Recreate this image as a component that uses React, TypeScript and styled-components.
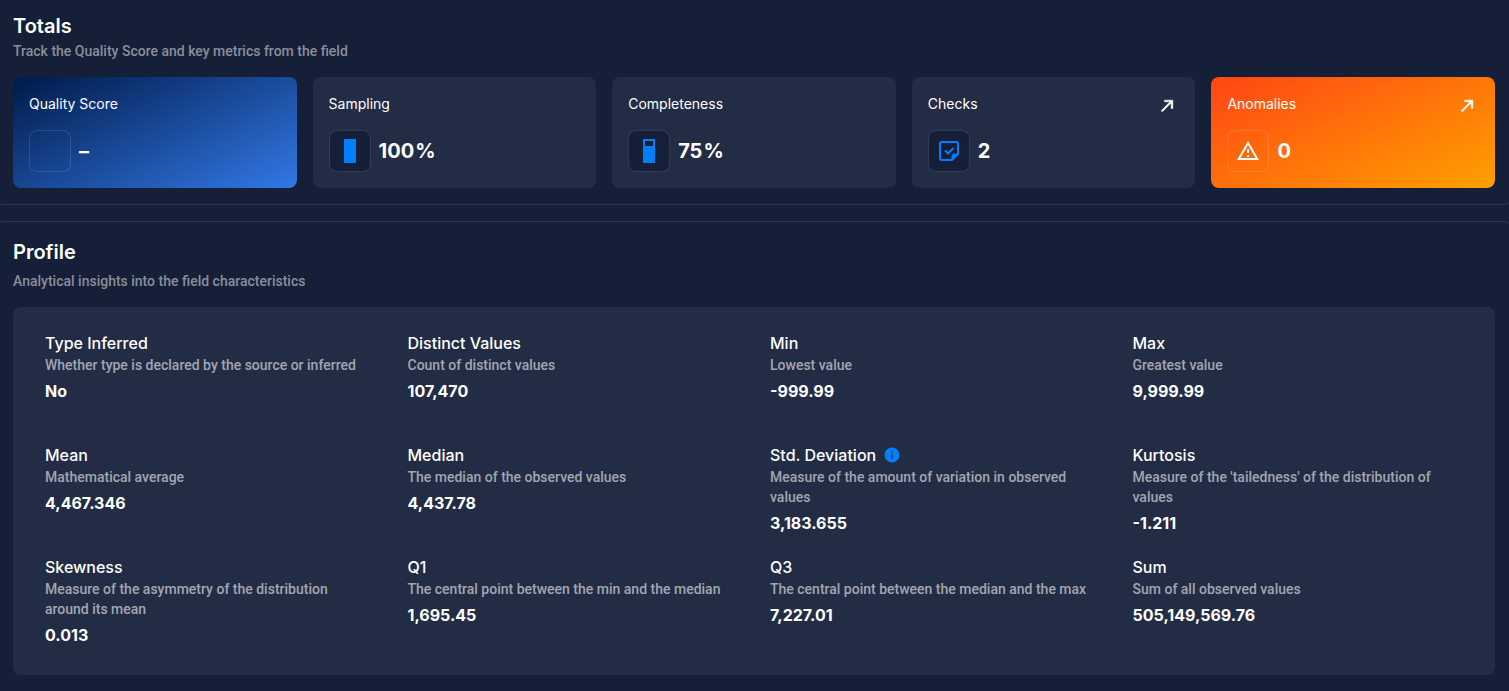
import React from "react";
import styled, { createGlobalStyle, css } from "styled-components";

const GlobalStyle = createGlobalStyle`
  *, *::before, *::after { box-sizing: border-box; }
  body {
    margin: 0;
    background: #151f38;
    color: #fff;
    font-family: "Inter", "Liberation Sans", sans-serif;
    font-size: 14px;
    line-height: 20px;
  }
  h2, h3, p, dl, dt, dd { margin: 0; }
`;

const Page = styled.main`
  min-height: 100vh;
  overflow-x: hidden;
  display: flex;
  flex-direction: column;
  gap: 16px;
`;

const Section = styled.section<{ $position: "first" | "last" }>`
  margin: 0 -3px 0 -4px;
  padding: 16px;
  border: 1px solid #2d364f;
  border-radius: 8px;
  ${({ $position }) =>
    $position === "first"
      ? css`
          padding-top: 12px;
          border-top: 0;
          border-top-left-radius: 0;
          border-top-right-radius: 0;
        `
      : css`
          border-bottom: 0;
          border-bottom-left-radius: 0;
          border-bottom-right-radius: 0;
        `}
`;

const SectionHeader = styled.header<{ $gap?: number }>`
  display: flex;
  flex-direction: column;
  gap: ${({ $gap = 0 }) => $gap}px;
  margin-bottom: 16px;
`;

const SectionTitle = styled.h2`
  font-size: 20px;
  line-height: 29px;
  font-weight: 600;
`;

const secondaryText = css`
  font-family: "Roboto", "Liberation Sans", sans-serif;
  font-size: 14px;
  line-height: 20px;
  font-weight: 500;
`;

const SectionSubtitle = styled.p`
  ${secondaryText}
  color: #898e9a;
`;

const CardGrid = styled.div`
  display: grid;
  grid-template-columns: repeat(5, minmax(0, 1fr));
  gap: 16px;
`;

type Tone = "plain" | "score" | "alert";

const cardFill: Record<Tone, string> = {
  plain: "#232c45",
  score: "linear-gradient(155deg, #001a49 0%, #3278e6 100%)",
  alert: "linear-gradient(155deg, #ff4614 0%, #ffa000 100%)",
};

const Card = styled.article<{ $tone: Tone }>`
  display: flex;
  flex-direction: column;
  gap: 12px;
  padding: 16px;
  border-radius: 8px;
  background: ${({ $tone }) => cardFill[$tone]};
`;

const CardHeader = styled.div`
  display: flex;
  justify-content: space-between;
  align-items: flex-start;
  height: 25px;
`;

const CardTitle = styled.h3`
  font-size: 14px;
  line-height: 22px;
  font-weight: 400;
`;

const OpenLink = styled.a`
  display: flex;
  align-items: center;
  justify-content: center;
  width: 24px;
  height: 25px;
  color: #fff;
`;

const CardBody = styled.div`
  display: flex;
  align-items: center;
  gap: 8px;
`;

const IconBox = styled.span<{ $tone: Tone }>`
  display: flex;
  align-items: center;
  justify-content: center;
  width: 42px;
  height: 42px;
  border-radius: 8px;
  border: 1px solid rgba(255, 255, 255, 0.12);
  background: ${({ $tone }) => ($tone === "plain" ? "#151f38" : "transparent")};
  color: ${({ $tone }) => ($tone === "plain" ? "#0080ff" : "#fff")};
`;

const CardValue = styled.p`
  display: flex;
  gap: 1px;
  font-size: 20px;
  line-height: 28px;
  font-weight: 700;
`;

const ProfilePanel = styled.dl`
  display: grid;
  grid-template-columns: repeat(4, minmax(0, 1fr));
  grid-auto-rows: 1fr;
  gap: 16px 32px;
  padding: 24px 32px;
  border-radius: 8px;
  background: #232c45;
`;

const Metric = styled.div`
  padding-bottom: 4px;
`;

const MetricName = styled.dt`
  display: flex;
  align-items: center;
  gap: 7px;
  font-size: 16px;
  line-height: 24px;
  font-weight: 500;
`;

const MetricHint = styled.dd`
  ${secondaryText}
  padding-right: 4px;
  color: #a2a6b0;
`;

const MetricValue = styled.dd`
  && { margin-top: 4px; }
  font-size: 16px;
  line-height: 24px;
  font-weight: 700;
`;

const InfoButton = styled.button`
  display: flex;
  padding: 0;
  border: 0;
  background: none;
  color: #0080ff;
  cursor: pointer;
`;

const ArrowIcon = () => (
  <svg width="20" height="20" viewBox="0 0 24 24" fill="currentColor" stroke="currentColor" strokeWidth="0.600" aria-hidden="true">
    <path d="M5 17.590 15.590 7H9V5h10v10h-2V8.410L6.410 19z" />
  </svg>
);

const LevelIcon = ({ level }: { level: number }) => (
  <svg width="12" height="24" viewBox="0 0 12 24" fill="currentColor" aria-hidden="true">
    <path
      fillRule="evenodd"
      d={`M0 0h12v24H0z${level < 100 ? `M2 2v${Math.round((100 - level) / 5)}h8V2z` : ""}`}
    />
  </svg>
);

const ChecksIcon = () => (
  <svg width="24" height="24" viewBox="0 0 24 24" fill="none" stroke="currentColor" strokeWidth="2" aria-hidden="true">
    <path d="M15 21H5a2 2 0 0 1-2-2V5a2 2 0 0 1 2-2h14a2 2 0 0 1 2 2v10z" />
    <path d="M15 21v-4a2 2 0 0 1 2-2h4z" fill="currentColor" strokeWidth="1" />
    <path d="m8 11.500 3 3 5.500-5.500" />
  </svg>
);

const AlertIcon = () => (
  <svg width="24" height="24" viewBox="0 0 24 24" fill="currentColor" aria-hidden="true">
    <path d="M12 2 1 21h22M12 6l7.530 13H4.470M11 10v4h2v-4m-2 6v2h2v-2" />
  </svg>
);

const InfoIcon = () => (
  <svg width="18" height="18" viewBox="0 0 24 24" fill="currentColor" aria-hidden="true">
    <path d="M13 9h-2V7h2m0 10h-2v-6h2m-1-9A10 10 0 0 0 2 12a10 10 0 0 0 10 10 10 10 0 0 0 10-10A10 10 0 0 0 12 2" />
  </svg>
);

interface Total {
  title: string;
  value: string;
  unit?: string;
  tone: Tone;
  icon?: React.ReactNode;
  href?: string;
}

const totals: Total[] = [
  { title: "Quality Score", value: "–", tone: "score" },
  { title: "Sampling", value: "100", unit: "%", tone: "plain", icon: <LevelIcon level={100} /> },
  { title: "Completeness", value: "75", unit: "%", tone: "plain", icon: <LevelIcon level={75} /> },
  { title: "Checks", value: "2", tone: "plain", icon: <ChecksIcon />, href: "#checks" },
  { title: "Anomalies", value: "0", tone: "alert", icon: <AlertIcon />, href: "#anomalies" },
];

interface ProfileMetric {
  name: string;
  hint: string;
  value: string;
  info?: boolean;
}

const metrics: ProfileMetric[] = [
  { name: "Type Inferred", hint: "Whether type is declared by the source or inferred", value: "No" },
  { name: "Distinct Values", hint: "Count of distinct values", value: "107,470" },
  { name: "Min", hint: "Lowest value", value: "-999.99" },
  { name: "Max", hint: "Greatest value", value: "9,999.99" },
  { name: "Mean", hint: "Mathematical average", value: "4,467.346" },
  { name: "Median", hint: "The median of the observed values", value: "4,437.78" },
  { name: "Std. Deviation", hint: "Measure of the amount of variation in observed values", value: "3,183.655", info: true },
  { name: "Kurtosis", hint: "Measure of the 'tailedness' of the distribution of values", value: "-1.211" },
  { name: "Skewness", hint: "Measure of the asymmetry of the distribution around its mean", value: "0.013" },
  { name: "Q1", hint: "The central point between the min and the median", value: "1,695.45" },
  { name: "Q3", hint: "The central point between the median and the max", value: "7,227.01" },
  { name: "Sum", hint: "Sum of all observed values", value: "505,149,569.76" },
];

export default function App() {
  return (
    <>
      <GlobalStyle />
      <Page>
        <Section $position="first">
          <SectionHeader>
            <SectionTitle>Totals</SectionTitle>
            <SectionSubtitle>Track the Quality Score and key metrics from the field</SectionSubtitle>
          </SectionHeader>
          <CardGrid>
            {totals.map((total) => (
              <Card key={total.title} $tone={total.tone}>
                <CardHeader>
                  <CardTitle>{total.title}</CardTitle>
                  {total.href && (
                    <OpenLink href={total.href} aria-label={`Open ${total.title}`}>
                      <ArrowIcon />
                    </OpenLink>
                  )}
                </CardHeader>
                <CardBody>
                  <IconBox $tone={total.tone}>{total.icon}</IconBox>
                  <CardValue>
                    <span>{total.value}</span>
                    {total.unit && <span>{total.unit}</span>}
                  </CardValue>
                </CardBody>
              </Card>
            ))}
          </CardGrid>
        </Section>

        <Section $position="last">
          <SectionHeader $gap={4}>
            <SectionTitle>Profile</SectionTitle>
            <SectionSubtitle>Analytical insights into the field characteristics</SectionSubtitle>
          </SectionHeader>
          <ProfilePanel>
            {metrics.map((metric) => (
              <Metric key={metric.name}>
                <MetricName>
                  {metric.name}
                  {metric.info && (
                    <InfoButton type="button" aria-label={`About ${metric.name}`}>
                      <InfoIcon />
                    </InfoButton>
                  )}
                </MetricName>
                <MetricHint>{metric.hint}</MetricHint>
                <MetricValue>{metric.value}</MetricValue>
              </Metric>
            ))}
          </ProfilePanel>
        </Section>
      </Page>
    </>
  );
}
